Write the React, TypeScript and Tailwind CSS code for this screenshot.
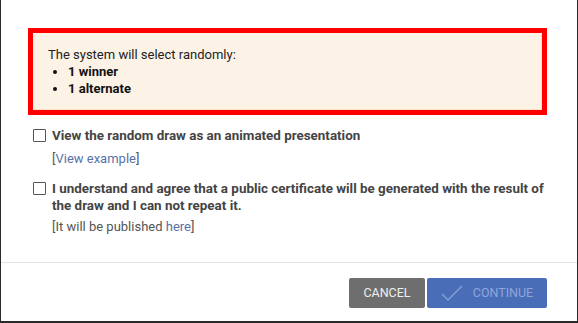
import React from "react";

function Checkbox() {
  return <span className="mt-[2px] block h-[13px] w-[13px] shrink-0 rounded-[1px] border-[1.5px] border-[#555] bg-white" />;
}

export default function App() {
  return (
    <div className="h-[323px] w-[578px] bg-[#2a2a2a] pl-[1px] pr-[1px] pb-[2px]" style={{ fontFamily: "Roboto, 'Liberation Sans', sans-serif" }}>
      <div className="flex h-full w-full flex-col bg-white">
        <div className="pl-[27px] pr-[30px] pt-[28px]">
          <div className="border-[5px] border-[#ff0000]">
            <div className="border border-[#f7e3c4] border-t-[#fdf2e6] border-l-[#fdf2e6] bg-[#fdf2e6] pl-[14px] pt-[12px] pb-[12px] text-[13px] leading-[17px] text-[#222]">
              <div className="mb-[1px]">The system will select randomly:</div>
              <ul className="list-disc pl-[20px] font-bold text-[#111]">
                <li className="leading-[16px]">1 winner</li>
                <li className="leading-[17px]">1 alternate</li>
              </ul>
            </div>
          </div>
        </div>
        <div className="pl-[32px] pr-[28px] pt-[12px] text-[13.4px] text-[#444]">
          <div className="flex gap-[6px]">
            <Checkbox />
            <div>
              <div className="font-bold leading-[17px]">View the random draw as an animated presentation</div>
              <div className="mt-[6px] text-[13px] leading-[17px] text-[#555]">
                [<span className="text-[#5872a9]">View example</span>]
              </div>
            </div>
          </div>
          <div className="mt-[13px] flex gap-[6px]">
            <Checkbox />
            <div>
              <div className="font-bold leading-[17px]">
                I understand and agree that a public certificate will be generated with the result of the draw and I can not repeat it.
              </div>
              <div className="mt-[4px] text-[13px] leading-[17px] text-[#555]">
                [It will be published <span className="text-[#5872a9]">here</span>]
              </div>
            </div>
          </div>
        </div>
        <div className="mt-auto border-t border-[#e3e3e3] pl-[348px] pt-[15px] pb-[13px]">
          <div className="flex gap-[2px]">
            <button className="flex h-[30px] w-[76px] items-center justify-center rounded-[2px] bg-[#6e6e6e] text-[12.5px] text-[#f0f0f0]">
              CANCEL
            </button>
            <button className="flex h-[30px] w-[120px] items-center justify-center gap-[10px] rounded-[2px] bg-[#4a6db8] text-[12.5px] text-[#8fa6d8]">
              <svg width="22" height="16" viewBox="0 0 22 16" fill="none">
                <path d="M1 9 L7 15 L21 1" stroke="#8fa6d8" strokeWidth="1.2" />
              </svg>
              CONTINUE
            </button>
          </div>
        </div>
      </div>
    </div>
  );
}
